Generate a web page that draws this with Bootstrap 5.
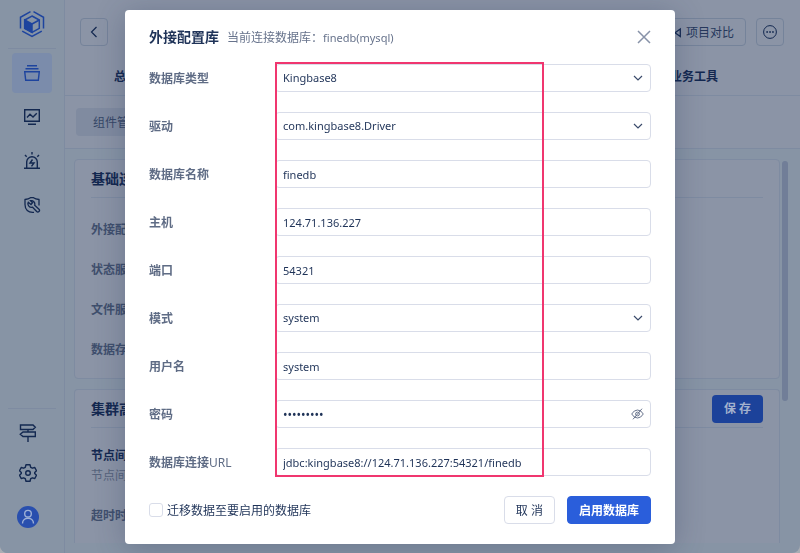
<!DOCTYPE html>
<html lang="zh-CN">
<head>
<meta charset="utf-8">
<meta name="viewport" content="width=device-width, initial-scale=1">
<title>外接配置库</title>
<link rel="stylesheet" href="https://cdn.jsdelivr.net/npm/bootstrap@5.3.0/dist/css/bootstrap.min.css">
<style>
:root{--ink:#132850;--ink-2:#364767;--line:#7e8ba1;--field:#d9dde9;--blue:#2a5edb}
body{font-family:"Noto Sans","Noto Sans CJK SC",sans-serif;font-size:12px;line-height:18px;color:var(--ink);background:#a9adb4}
.app-shell{height:100vh;background:#8794a5;border-radius:0 0 8px 8px;overflow:hidden}
.side{width:65px;border-right:1px solid var(--line);background:#8794a5}
.side-logo{height:48px}
.side hr{height:1px;margin:0 8px;border:0;background:var(--line);opacity:1}
.side-btn{width:40px;height:40px;border-radius:4px;color:var(--ink);text-decoration:none}
.side-btn.active{background:#7b8cab;color:#1e449e}
.side-foot{width:56px;padding-bottom:16px}
.topbar{background:#8b94a6}
.tools{padding:18px 16px 0 15px;gap:10px}
.tool-btn{height:28px;border:1px solid #75839a;border-radius:4px;color:#26385c;background:transparent;font-size:12px;line-height:18px;padding:1px 0 0}
.tool-sq{width:28px;padding:0}
.tool-wide{padding:1px 11px 0}
.tabs{height:50px;padding:12px 82px 0 49px;border-bottom:1px solid var(--line);font-weight:700}
.tabs a,.pills a{color:var(--ink);text-decoration:none;line-height:18px}
.tabs a{padding-top:10px}
.pills{height:53px;padding:0 11px;border-bottom:1px solid var(--line)}
.pills a{background:#808ba0;border-radius:4px;padding:6px 17px 4px;color:var(--ink-2)}
.panel-list{padding:10px 20px 10px 9px;gap:10px;min-height:0}
.panel{border:1px solid var(--line);border-radius:4px;background:#8b94a6;padding:0 16px}
.panel-a{height:220px}
.panel-b{min-height:0;border-bottom:0;border-radius:4px 4px 0 0;overflow:hidden}
.panel-head{height:38px;border-bottom:1px solid var(--line)}
.panel-head h2{font-size:14px;line-height:20px;font-weight:700;margin:0}
.panel-row{height:40px;color:#3f4f6d;font-weight:700}
.panel-rows{padding-top:12px}
.panel-note{padding:18px 0 10px;line-height:20px;color:#56637c}
.panel-note strong{color:var(--ink)}
.save-btn{width:51px;height:28px;border:0;border-radius:4px;background:#1c429a;color:#a3b1cd;font-size:12px;font-weight:700;padding:0}
.bar{position:absolute;top:12px;right:12px;width:6px;height:240px;border-radius:3px;background:#717e98}
.veil{position:fixed;inset:0;padding-top:10px}
.dialog{width:550px;background:#fff;border-radius:4px;padding:0 24px 20px;box-shadow:0 4px 30px rgba(35,50,85,.3)}
.dialog-head{height:54px}
.dialog-head h1{font-size:14px;line-height:20px;font-weight:700;margin:0;color:#1f3358}
.dialog-head p{color:#67738c;margin:0 0 0 8px;padding-top:1px}
.latin{font-size:11px}
.close-x{border:0;background:none;padding:0;width:14px;height:14px}
.fields{gap:20px}
.fields label{width:126px;font-weight:700;color:#5f6c85;padding-top:2px}
.fields .form-control,.fields .form-select{height:28px;min-height:28px;font-size:11px;line-height:18px;padding:4px 7px;border:1px solid var(--field);border-radius:4px;color:#1f3358}
.fields .form-select{background:#fff url("data:image/svg+xml,%3Csvg xmlns='http://www.w3.org/2000/svg' viewBox='0 0 10 10'%3E%3Cpath d='M1 3l4 4 4-4' fill='none' stroke='%233b4b6b' stroke-width='1.2'/%3E%3C/svg%3E") no-repeat right 7px center/10px 10px}
.fields input[type=password]{font-size:12px}
.eye{position:absolute;right:7px;top:8px;border:0;background:none;padding:0;width:13px;height:12px;display:flex}
.frame{position:absolute;left:126px;top:-2px;width:269px;bottom:-1px;border:2px solid #f0366f;pointer-events:none}
.dialog-foot{padding-top:20px;gap:12px}
.dialog-foot .form-check-input{width:14px;height:14px;margin:0;border:1px solid var(--field);border-radius:3px}
.dialog-foot label{margin-left:4px;padding-top:1px;color:#1f3358}
.dialog-foot .btn{height:28px;font-size:12px;line-height:18px;padding:5px 11px 3px;border-radius:4px;--bs-btn-border-color:var(--field);--bs-btn-color:#1f3358}
.dialog-foot .go{background:var(--blue);border-color:var(--blue);color:#fff;font-weight:700}
svg{display:block}
</style>
</head>
<body>
<div class="app-shell d-flex">
  <nav class="side d-flex flex-column flex-shrink-0" aria-label="主导航">
    <div class="side-logo d-flex justify-content-center align-items-center">
      <svg width="26" height="28" viewBox="0 0 26 28" fill="none" stroke="#1e449e" stroke-width="1.5"><path d="M11.5 1.7L1.5 7.3V18.5M14.5 1.7L24.5 7.3V18.5M3.2 21.2L13 26.5L22.8 21.2"/><path d="M13 6L20.3 10V18.3L13 22.3L5.7 18.3V10Z"/><path d="M5.7 10L13 14V22.3L5.7 18.3Z" fill="#1e449e"/><path d="M13 14L20.3 10"/></svg>
    </div>
    <hr>
    <div class="d-flex flex-column align-items-center gap-1 pt-1">
      <a href="#" class="side-btn active d-flex justify-content-center align-items-center" aria-label="总览"><svg width="16" height="16" viewBox="0 0 16 16" fill="none" stroke="currentColor" stroke-width="1.4"><path d="M3 .7H13M1.5 3.7H14.5M.7 6.7H15.3L14.3 15.3H1.7Z"/></svg></a>
      <a href="#" class="side-btn d-flex justify-content-center align-items-center" aria-label="监控"><svg width="16" height="16" viewBox="0 0 16 16" fill="none" stroke="currentColor" stroke-width="1.4"><path d="M.7 .7H15.3V12.3H.7ZM4 15.3H12M3 8.5L6 5.3L9 8L12.8 4.3"/></svg></a>
      <a href="#" class="side-btn d-flex justify-content-center align-items-center" aria-label="告警"><svg width="16" height="18" viewBox="0 0 16 18" fill="none" stroke="currentColor" stroke-width="1.4"><path d="M0 16.3H16M2.7 16V10A5.3 5.3 0 0 1 13.3 10V16M8 0V2.5M1 3L2.7 4.7M15 3L13.3 4.7"/><path d="M8.5 7.5L6 11H10L7.5 14.3"/></svg></a>
      <a href="#" class="side-btn d-flex justify-content-center align-items-center" aria-label="维护"><svg width="17" height="18" viewBox="0 0 17 18" fill="none" stroke="currentColor" stroke-width="1.3"><path d="M10 16.3C4 17 1 13.5 1 8.5V3.5Q4.5 3.2 6.5 1.7H9.5Q11.5 3.2 15 3.5V9.5"/><path d="M4.3 6.2A3.6 3.6 0 0 0 8.6 11.2L12.7 15.5A1.5 1.5 0 0 0 15 13.3L10.7 9.2A3.6 3.6 0 0 0 6.5 4.7L8.5 6.7L7 8.5Z"/></svg></a>
    </div>
    <hr class="mt-auto">
    <div class="side-foot d-flex flex-column align-items-center pt-1">
      <a href="#" class="side-btn d-flex justify-content-center align-items-center" aria-label="指引"><svg width="18" height="18" viewBox="0 0 18 18" fill="none" stroke="currentColor" stroke-width="1.4"><path d="M1.5 1H14L16.3 3.3L14 5.5H1.5ZM16.3 8H4L1.3 10.3L4 12.5H16.3ZM9 5.5V8M9 12.5V18"/></svg></a>
      <a href="#" class="side-btn d-flex justify-content-center align-items-center" aria-label="设置"><svg width="18" height="18" viewBox="0 0 18 18" fill="none" stroke="currentColor" stroke-width="1.4" stroke-linejoin="round"><path d="M7 .8H11L11.7 3.3L13.4 4.2L15.8 3.5L17.5 6.8L15.7 8.5V9.5L17.5 11.2L15.8 14.5L13.4 13.8L11.7 14.7L11 17.2H7L6.3 14.7L4.6 13.8L2.2 14.5L.5 11.2L2.3 9.5V8.5L.5 6.8L2.2 3.5L4.6 4.2L6.3 3.3Z"/><circle cx="9" cy="9" r="2.3"/></svg></a>
      <a href="#" class="side-btn d-flex justify-content-center align-items-center mt-1" aria-label="账户"><svg width="22" height="22" viewBox="0 0 22 22" fill="none" stroke="#9db0d6" stroke-width="1.4"><circle cx="11" cy="11" r="11" fill="#294fae" stroke="none"/><circle cx="11" cy="7.7" r="3.3"/><path d="M5.5 17.5C5.5 10.5 16.5 10.5 16.5 17.5"/></svg></a>
    </div>
  </nav>

  <main class="flex-grow-1 d-flex flex-column">
    <div class="topbar">
      <div class="tools d-flex">
        <button type="button" class="tool-btn tool-sq d-flex justify-content-center align-items-center me-auto" aria-label="返回"><svg width="8" height="12" viewBox="0 0 8 12" fill="none" stroke="#132850" stroke-width="1.2"><path d="M6.5 1L1.5 6L6.5 11"/></svg></button>
        <button type="button" class="tool-btn tool-wide d-flex align-items-center gap-1"><svg width="12" height="12" viewBox="0 0 12 12" fill="none" stroke="#132850" stroke-width="1.3"><path d="M10.3 2V9.5L5 5.8Z"/></svg>项目对比</button>
        <button type="button" class="tool-btn tool-sq d-flex justify-content-center align-items-center" aria-label="更多"><svg width="14" height="14" viewBox="0 0 14 14" fill="none" stroke="#132850"><circle cx="7" cy="7" r="6.4"/><path d="M3.3 7H5M6.2 7H7.9M9.1 7H10.8" stroke-width="1.5"/></svg></button>
      </div>
      <div class="tabs d-flex justify-content-between"><a href="#">总览</a><a href="#">业务工具</a></div>
      <div class="pills d-flex align-items-center"><a href="#">组件管理</a></div>
    </div>
    <div class="panel-list flex-grow-1 d-flex flex-column position-relative">
      <section class="panel panel-a flex-shrink-0">
        <div class="panel-head d-flex align-items-center"><h2>基础连接</h2></div>
        <div class="panel-rows">
          <div class="panel-row d-flex align-items-center">外接配置</div>
          <div class="panel-row d-flex align-items-center">状态服务</div>
          <div class="panel-row d-flex align-items-center">文件服务</div>
          <div class="panel-row d-flex align-items-center">数据存储</div>
        </div>
      </section>
      <section class="panel panel-b flex-grow-1">
        <div class="panel-head d-flex align-items-center justify-content-between"><h2>集群高级</h2><button type="button" class="save-btn">保 存</button></div>
        <div class="panel-note"><strong>节点间通</strong><br>节点间通</div>
        <div class="panel-row d-flex align-items-center">超时时间</div>
      </section>
      <div class="bar"></div>
    </div>
  </main>
</div>

<div class="veil d-flex justify-content-center align-items-start">
  <form class="dialog" role="dialog" aria-labelledby="dlg-title">
    <div class="dialog-head d-flex align-items-center">
      <h1 id="dlg-title">外接配置库</h1><p>当前连接数据库：<span class="latin">finedb(mysql)</span></p>
      <button type="button" class="close-x ms-auto" aria-label="关闭"><svg width="14" height="14" viewBox="0 0 14 14" stroke="#8792a8" stroke-width="1.5"><path d="M1 1L13 13M13 1L1 13"/></svg></button>
    </div>
    <div class="fields d-flex flex-column position-relative">
      <div class="d-flex align-items-center"><label for="f1">数据库类型</label><div class="flex-grow-1"><select id="f1" class="form-select"><option>Kingbase8</option></select></div></div>
      <div class="d-flex align-items-center"><label for="f2">驱动</label><div class="flex-grow-1"><select id="f2" class="form-select"><option>com.kingbase8.Driver</option></select></div></div>
      <div class="d-flex align-items-center"><label for="f3">数据库名称</label><div class="flex-grow-1"><input id="f3" class="form-control" value="finedb"></div></div>
      <div class="d-flex align-items-center"><label for="f4">主机</label><div class="flex-grow-1"><input id="f4" class="form-control" value="124.71.136.227"></div></div>
      <div class="d-flex align-items-center"><label for="f5">端口</label><div class="flex-grow-1"><input id="f5" class="form-control" value="54321"></div></div>
      <div class="d-flex align-items-center"><label for="f6">模式</label><div class="flex-grow-1"><select id="f6" class="form-select"><option>system</option></select></div></div>
      <div class="d-flex align-items-center"><label for="f7">用户名</label><div class="flex-grow-1"><input id="f7" class="form-control" value="system"></div></div>
      <div class="d-flex align-items-center"><label for="f8">密码</label><div class="flex-grow-1 position-relative"><input id="f8" type="password" class="form-control" value="kingbase8" autocomplete="off"><button type="button" class="eye" aria-label="显示密码"><svg width="13" height="12" viewBox="0 0 13 12" fill="none" stroke="#67738c"><path d="M.7 6Q3 2 6.5 2T12.3 6Q10 10 6.5 10T.7 6ZM11 .7L2 11.3"/><circle cx="6.5" cy="6" r="1.9"/></svg></button></div></div>
      <div class="d-flex align-items-center"><label for="f9">数据库连接<span class="fw-normal">URL</span></label><div class="flex-grow-1"><input id="f9" class="form-control" value="jdbc:kingbase8://124.71.136.227:54321/finedb"></div></div>
      <div class="frame"></div>
    </div>
    <div class="dialog-foot d-flex align-items-center">
      <div class="d-flex align-items-center me-auto"><input id="mig" type="checkbox" class="form-check-input"><label for="mig">迁移数据至要启用的数据库</label></div>
      <button type="button" class="btn">取 消</button>
      <button type="submit" class="btn go">启用数据库</button>
    </div>
  </form>
</div>
<script src="https://cdn.jsdelivr.net/npm/bootstrap@5.3.0/dist/js/bootstrap.bundle.min.js"></script>
</body>
</html>
